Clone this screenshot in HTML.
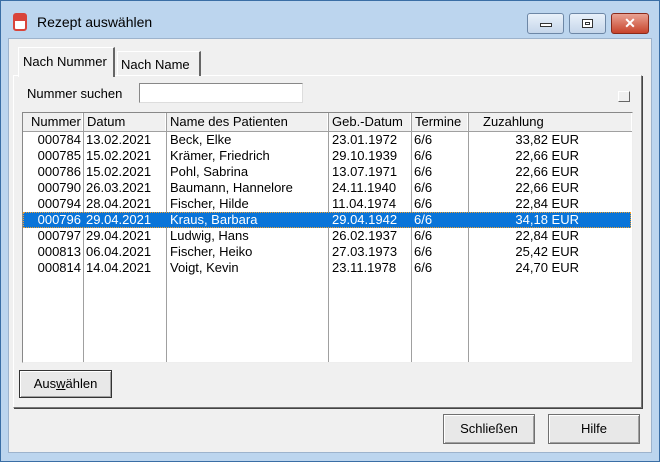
<!DOCTYPE html>
<html><head><style>
*{box-sizing:border-box;margin:0;padding:0}
body{width:660px;height:462px;overflow:hidden;font-family:"Liberation Sans",sans-serif;font-size:13px;color:#000;background:#fff}
.win{position:absolute;left:0;top:0;width:660px;height:462px;background:#bcd5ee;border:1px solid #3a6ea5}
.cl{position:absolute;left:8px;top:38px;width:644px;height:415px;background:#f0f0f0;border:1px solid #9db3cc}
.a{position:absolute}
.tb{position:absolute;top:12px;height:21px;border:1px solid #6d87a6;border-radius:3px;background:linear-gradient(#e9f1fa,#c5d6ea)}
.btn{position:absolute;border:1px solid #707070;background:#e8e8e8;box-shadow:inset 1px 1px #fff,inset -1px -1px #a0a0a0;text-align:center;font-size:13px}
.row{position:absolute;left:0;width:608px;height:16px;font-size:13px;line-height:16px}
.row span{position:absolute;top:0}
.hd span{position:absolute;top:0;height:18px;line-height:18px;border-right:1px solid #a0a0a0;box-shadow:inset -1px 0 #fff;padding-left:3px}
.vl{position:absolute;top:19px;bottom:0;width:1px;background:#a0a0a0}
</style></head><body>
<div class="win">
<div class="a" style="left:12px;top:12px;width:14px;height:18px;border:2px solid #d9443a;border-radius:3px;background:#fff"><div style="position:absolute;left:0;top:0;width:10px;height:6px;background:#d9443a"></div></div>
<div class="a" style="left:36px;top:13px;font-size:14px">Rezept auswählen</div>
<div class="tb" style="left:526px;width:37px"><div class="a" style="left:12px;top:9px;width:12px;height:4px;border:1px solid #333;background:#fff"></div></div>
<div class="tb" style="left:568px;width:37px"><div class="a" style="left:12px;top:5px;width:11px;height:9px;border:1px solid #333;background:#fff;box-shadow:inset 0 0 0 2px #fff,inset 0 0 0 3px #333"></div></div>
<div class="tb" style="left:610px;width:38px;background:linear-gradient(#e9a393,#c7432b);border-color:#8a2a1a;color:#fff;font-weight:bold;text-align:center;line-height:18px;font-size:14px">✕</div>
</div>
<div class="cl">
<div class="a" style="left:4px;top:36px;width:629px;height:333px;border:1px solid #fff;border-right-color:#777;border-bottom-color:#777;box-shadow:1px 1px #444"></div>
<div class="a" style="left:9px;top:8px;width:97px;height:30px;background:#f0f0f0;border:1px solid #fff;border-bottom:none;border-right:2px solid #666;padding:6px 0 0 4px">Nach Nummer</div>
<div class="a" style="left:108px;top:12px;width:84px;height:25px;border:1px solid #fff;border-bottom:none;border-right:2px solid #666;padding:5px 0 0 3px">Nach Name</div>
<div class="a" style="left:18px;top:47px">Nummer suchen</div>
<div class="a" style="left:130px;top:44px;width:164px;height:20px;background:#fff;border:1px solid #888;border-right-color:#ddd;border-bottom-color:#ddd"></div>
<div class="a" style="left:609px;top:52px;width:12px;height:11px;border:1px solid #fff;border-right-color:#666;border-bottom-color:#666"></div>
<div class="a" style="left:13px;top:73px;width:611px;height:251px;background:#fff;border:1px solid #888;border-right-color:#eee;border-bottom-color:#eee;overflow:hidden">
 <div class="hd a" style="left:0;top:0;width:610px;height:19px;background:#f0f0f0;border-bottom:1px solid #a0a0a0">
  <span style="left:0;width:61px;padding-left:8px">Nummer</span><span style="left:61px;width:83px">Datum</span><span style="left:144px;width:162px">Name des Patienten</span><span style="left:306px;width:83px">Geb.-Datum</span><span style="left:389px;width:57px">Termine</span><span style="left:446px;width:164px;padding-left:14px">Zuzahlung</span>
 </div>
 <div class="vl" style="left:60px"></div><div class="vl" style="left:143px"></div><div class="vl" style="left:305px"></div><div class="vl" style="left:388px"></div><div class="vl" style="left:445px"></div>
 <div class="a" style="left:0;top:19px;width:610px">
  <div class="row" style="top:0"><span style="right:550px">000784</span><span style="left:63px">13.02.2021</span><span style="left:147px">Beck, Elke</span><span style="left:309px">23.01.1972</span><span style="left:391px">6/6</span><span style="right:52px">33,82 EUR</span></div>
  <div class="row" style="top:16px"><span style="right:550px">000785</span><span style="left:63px">15.02.2021</span><span style="left:147px">Krämer, Friedrich</span><span style="left:309px">29.10.1939</span><span style="left:391px">6/6</span><span style="right:52px">22,66 EUR</span></div>
  <div class="row" style="top:32px"><span style="right:550px">000786</span><span style="left:63px">15.02.2021</span><span style="left:147px">Pohl, Sabrina</span><span style="left:309px">13.07.1971</span><span style="left:391px">6/6</span><span style="right:52px">22,66 EUR</span></div>
  <div class="row" style="top:48px"><span style="right:550px">000790</span><span style="left:63px">26.03.2021</span><span style="left:147px">Baumann, Hannelore</span><span style="left:309px">24.11.1940</span><span style="left:391px">6/6</span><span style="right:52px">22,66 EUR</span></div>
  <div class="row" style="top:64px"><span style="right:550px">000794</span><span style="left:63px">28.04.2021</span><span style="left:147px">Fischer, Hilde</span><span style="left:309px">11.04.1974</span><span style="left:391px">6/6</span><span style="right:52px">22,84 EUR</span></div>
  <div class="row" style="top:80px;background:#0a74d8;color:#fff;outline:1px dotted #f0a030;outline-offset:-1px"><span style="right:550px">000796</span><span style="left:63px">29.04.2021</span><span style="left:147px">Kraus, Barbara</span><span style="left:309px">29.04.1942</span><span style="left:391px">6/6</span><span style="right:52px">34,18 EUR</span></div>
  <div class="row" style="top:96px"><span style="right:550px">000797</span><span style="left:63px">29.04.2021</span><span style="left:147px">Ludwig, Hans</span><span style="left:309px">26.02.1937</span><span style="left:391px">6/6</span><span style="right:52px">22,84 EUR</span></div>
  <div class="row" style="top:112px"><span style="right:550px">000813</span><span style="left:63px">06.04.2021</span><span style="left:147px">Fischer, Heiko</span><span style="left:309px">27.03.1973</span><span style="left:391px">6/6</span><span style="right:52px">25,42 EUR</span></div>
  <div class="row" style="top:128px"><span style="right:550px">000814</span><span style="left:63px">14.04.2021</span><span style="left:147px">Voigt, Kevin</span><span style="left:309px">23.11.1978</span><span style="left:391px">6/6</span><span style="right:52px">24,70 EUR</span></div>
 </div>
</div>
<div class="btn" style="left:10px;top:331px;width:93px;height:28px;line-height:26px;border-color:#333">Aus<u>w</u>ählen</div>
<div class="btn" style="left:434px;top:375px;width:92px;height:30px;line-height:28px">Schließen</div>
<div class="btn" style="left:539px;top:375px;width:92px;height:30px;line-height:28px">Hilfe</div>
</div>
</body></html>
